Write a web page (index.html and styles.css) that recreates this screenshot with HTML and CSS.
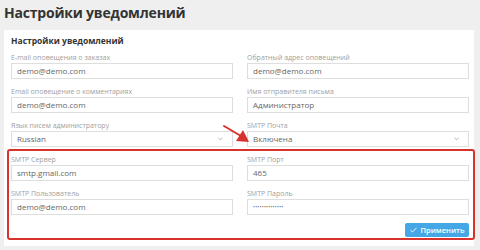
FILE: index.html
```html
<!DOCTYPE html>
<html lang="ru">
<head>
<meta charset="utf-8">
<link rel="stylesheet" href="styles.css">
</head>
<body>
<h1 class="page-title">Настройки уведомлений</h1>
<div class="card">
  <div class="card-title">Настройки уведомлений</div>
  <div class="grid">
    <div class="field"><div class="label">E-mail оповещения о заказах</div><div class="input">demo@demo.com</div></div>
    <div class="field"><div class="label">Обратный адрес оповещений</div><div class="input">demo@demo.com</div></div>
    <div class="field"><div class="label">Email оповещение о комментариях</div><div class="input">demo@demo.com</div></div>
    <div class="field"><div class="label">Имя отправителя письма</div><div class="input">Администратор</div></div>
    <div class="field"><div class="label">Язык писем администратору</div><div class="input select">Russian<svg class="chev" viewBox="0 0 6 4" width="5" height="4"><polyline points="0.5,0.5 3,3 5.5,0.5" fill="none" stroke="#999" stroke-width="0.9"/></svg></div></div>
    <div class="field"><div class="label">SMTP Почта</div><div class="input select">Включена<svg class="chev" viewBox="0 0 6 4" width="5" height="4"><polyline points="0.5,0.5 3,3 5.5,0.5" fill="none" stroke="#999" stroke-width="0.9"/></svg></div></div>
  </div>
  <div class="smtp">
    <div class="grid">
      <div class="field"><div class="label">SMTP Сервер</div><div class="input">smtp.gmail.com</div></div>
      <div class="field"><div class="label">SMTP Порт</div><div class="input">465</div></div>
      <div class="field"><div class="label">SMTP Пользователь</div><div class="input">demo@demo.com</div></div>
      <div class="field"><div class="label">SMTP Пароль</div><div class="input pass">••••••••••••••</div></div>
    </div>
    <div class="actions">
      <button class="btn"><svg viewBox="0 0 8 6" width="7" height="6"><polyline points="0.6,3.2 2.8,5.2 7.4,0.6" fill="none" stroke="#fff" stroke-width="1.1"/></svg>Применить</button>
    </div>
  </div>
</div>
<svg class="arrow" width="40" height="30" viewBox="0 0 40 30">
  <line x1="4" y1="6" x2="21" y2="16" stroke="#d8312e" stroke-width="2" stroke-linecap="round"/>
  <polygon points="29,22 16,21 23,10" fill="#d8312e"/>
</svg>
</body>
</html>
```
FILE: styles.css
```css
* { box-sizing: border-box; }
html, body { margin: 0; padding: 0; }
body {
  background: #efefef;
  font-family: "Open Sans", "Liberation Sans", sans-serif;
  color: #555;
  width: 480px;
  height: 250px;
  overflow: hidden;
  position: relative;
}
.page-title {
  margin: 0;
  padding: 3px 0 0 4px;
  height: 29.5px;
  font-size: 14px;
  line-height: 19px;
  font-weight: 700;
  color: #333;
  letter-spacing: -0.2px;
}
.card {
  margin-left: 4px;
  width: 470px;
  background: #fff;
  padding: 5.5px 5px 6px 7px;
}
.card-title {
  font-size: 8.5px;
  line-height: 11px;
  font-weight: 700;
  color: #333;
  margin-bottom: 5.5px;
}
.grid {
  display: grid;
  grid-template-columns: 222px 222px;
  column-gap: 14px;
  row-gap: 7px;
}
.field { display: flex; flex-direction: column; }
.label {
  font-size: 7px;
  line-height: 11px;
  color: #a0a0a0;
  white-space: nowrap;
}
.input {
  height: 16px;
  border: 1px solid #dedede;
  background: #fff;
  font-size: 8px;
  line-height: 14px;
  padding: 0 5px;
  color: #666;
  display: flex;
  align-items: center;
  justify-content: space-between;
}
.pass { font-size: 5px; letter-spacing: 0.3px; }
.chev { margin-right: 4px; }
.smtp {
  margin: 2.5px -6px 0 -4px;
  border: 2px solid #d8312e;
  border-radius: 3px;
  padding: 2.5px 4px 1px 2px;
}
.actions {
  display: flex;
  justify-content: flex-end;
  margin-top: 8px;
}
.btn {
  width: 64px;
  height: 14.5px;
  border: 0;
  border-radius: 2px;
  background: #45a7e6;
  color: #fff;
  font-family: "Open Sans", "Liberation Sans", sans-serif;
  font-size: 7.5px;
  font-weight: 600;
  display: flex;
  align-items: center;
  justify-content: center;
  gap: 4px;
  padding: 0;
}
.arrow {
  position: absolute;
  left: 220px;
  top: 120px;
}
```
